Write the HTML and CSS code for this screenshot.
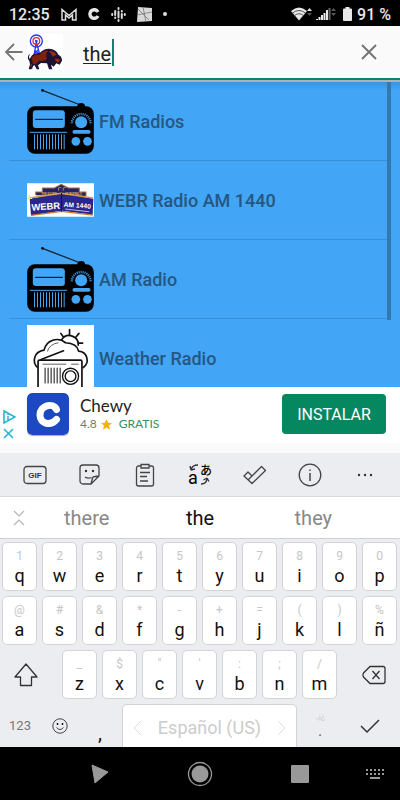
FILE: index.html
```html
<!DOCTYPE html>
<html lang="es">
<head>
    <meta charset="UTF-8">
    <meta name="viewport" content="width=device-width, initial-scale=1.0">
    <title>Buffalo Radio</title>
    <link rel="stylesheet" href="styles.css">
</head>
<body>
    <!-- shared icon for the generic stations -->
    <svg class="sprite" aria-hidden="true">
        <symbol id="radio" viewBox="0 0 200 195">
            <path d="M46 4L160 48" stroke="#123" stroke-width="4"/>
            <circle cx="46" cy="4" r="4"/>
            <path d="M150 54a12 12 0 0 1 24 0z"/>
            <rect y="52" width="200" height="142" rx="23"/>
            <g fill="#42a5f5">
                <rect x="17" y="64" width="96" height="53" rx="9"/>
                <rect x="136" y="123" width="54" height="11" rx="5"/>
                <circle cx="162" cy="100" r="18"/>
                <circle cx="146" cy="157" r="13"/>
                <circle cx="181" cy="157" r="13"/>
            </g>
            <path d="M24 91H107" stroke="#000" stroke-width="3"/>
            <g stroke="#42a5f5" fill="none">
                <path d="M8 130H120" stroke-width="3"/>
                <path d="M22 136v45M31 136v45M40 136v45M49 136v45M58 136v45M67 136v45M76 136v45M85 136v45M94 136v45M103 136v45M111 136v45" stroke-width="3"/>
                <path d="M134 103A28 28 0 1 1 190 103" stroke-width="7" stroke-dasharray="3 3"/>
            </g>
        </symbol>
    </svg>

    <header class="status">
        <span class="time">12:35</span>
        <svg width="16" height="13" viewBox="0 0 16 13"><path d="M1 12V1.500L8 7.500L15 1.500V12H11.500V7L8 10L4.500 7V12Z" fill="none" stroke="#ddd" stroke-width="1.500"/></svg>
        <svg width="12" height="12" viewBox="0 0 12 12"><path d="M10 4A4.300 4.300 0 1 0 10 8" fill="none" stroke="#e4e4e4" stroke-width="3.400"/></svg>
        <svg width="15" height="15" viewBox="0 0 15 15"><path d="M1.200 7v1M4.200 4v4M4.200 10.500v.5M7.500 1v1M7.500 4.500v6M7.500 13v1M10.800 4v.5M10.800 7v4M13.800 7v1" stroke="#ddd" stroke-width="2" stroke-linecap="round"/></svg>
        <svg width="15" height="15" viewBox="0 0 15 15"><path d="M1 0L15 1V14L0 15Z" fill="#d8d8d8"/><path d="M0 8L15 5M6 0L9 15M1 2L12 13" stroke="#777" stroke-width=".8"/></svg>
        <span class="dot"></span>
        <span class="status-right">
            <svg width="22" height="14" viewBox="0 0 22 14"><path d="M0 4Q8 -3 16 4L8 13.500Z" fill="#e8e8e8"/><path d="M1.500 6Q8 1 14.500 6M3.500 8.500Q8 5 12.500 8.500" fill="none" stroke="#555" stroke-width="1"/><path d="M16 4L18.500 1L21 4Z" fill="#ddd"/><path d="M16 6L18.500 9L21 6Z" fill="#555"/></svg>
            <svg width="20" height="14" viewBox="0 0 20 14"><path d="M1 13v-1M3.500 13v-3M6 13V8M8.500 13V6M11 13V3" stroke="#e8e8e8" stroke-width="2"/><path d="M13.500 13V1" stroke="#666" stroke-width="2"/><path d="M15 4L17.500 1L20 4ZM15 6L17.500 9L20 6Z" fill="#555"/></svg>
            <svg class="battery" width="9" height="14" viewBox="0 0 9 14"><path d="M2.500 0h4v1.500H8a1 1 0 0 1 1 1V13a1 1 0 0 1-1 1H1a1 1 0 0 1-1-1V2.500a1 1 0 0 1 1-1h1.500Z" fill="#e8e8e8"/></svg>
            <span>91 %</span>
        </span>
    </header>

    <form class="search">
        <button type="button" class="back" aria-label="Atrás">
            <svg width="18" height="18" viewBox="0 0 18 18"><path d="M17.500 9H1.500M9 1L1 9L9 17" fill="none" stroke="#757575" stroke-width="1.800"/></svg>
        </button>
        <svg class="logo" viewBox="0 0 108 108">
            <rect width="108" height="108" fill="#fff"/>
            <g fill="none" stroke="#2338f2" stroke-width="4">
                <circle cx="28" cy="21" r="18"/>
                <path d="M28 24L14 104M28 24L42 76M22 48L36 60M20 60L34 48"/>
            </g>
            <circle cx="28" cy="21" r="10" fill="none" stroke="#e02a35" stroke-width="4"/>
            <circle cx="28" cy="21" r="4" fill="#2338f2"/>
            <path d="M3 75Q1 64 9 59Q4 68 8 75L15 64Q25 56 38 57Q50 44 66 44Q88 45 94 62Q105 66 105 80L98 92L88 88L80 98L72 92L76 106H66L60 88L42 87L33 94L37 106H29L23 94L18 96L13 106H5L9 91L7 81Z" fill="#1d1233"/>
            <path d="M14 70Q24 60 38 62Q50 48 64 50Q54 58 60 76Q50 83 36 80Q28 92 18 91Q15 80 14 70Z" fill="#7d220e"/>
            <path d="M66 50Q84 51 88 62L78 68ZM84 72L100 77L94 86L86 81ZM10 92L16 88L12 101Z" fill="#9b2b12"/>
        </svg>
        <label class="field" aria-label="Buscar">
            <input type="text" class="query" value="the" spellcheck="false">
            <span class="caret"></span>
        </label>
        <button type="button" class="clear" aria-label="Borrar">
            <svg width="16" height="16" viewBox="0 0 16 16"><path d="M1 1L15 15M15 1L1 15" stroke="#757575" stroke-width="2"/></svg>
        </button>
    </form>

    <main class="stations">
        <ul class="station-list">
            <li class="station"><svg class="thumb"><use href="#radio"/></svg><span>FM Radios</span></li>
            <li class="station">
                <svg class="thumb thumb-wide" viewBox="0 0 200 100">
                    <rect width="200" height="100" fill="#fff"/>
                    <path d="M26 36V26H46V14H82L102 3L124 14H156V26H176V38Z" fill="#272266"/>
                    <path d="M26 34V26H46V14H82L102 3L124 14H156V26H176V38" fill="none" stroke="#a56c43" stroke-width="3"/>
                    <path d="M8 46L102 28L198 46L196 94L104 82L12 96Z" fill="#2b268b"/>
                    <path d="M8 44L102 30L198 44" fill="none" stroke="#d39a45" stroke-width="4"/>
                    <path d="M12 96L104 84L196 95" fill="none" stroke="#cf7b35" stroke-width="4"/>
                    <path d="M103 29V84" stroke="#15123f" stroke-width="3"/>
                    <path d="M94 22v-8l8-2M108 22v-8l8-2" fill="none" stroke="#e4b55e" stroke-width="2"/>
                    <path d="M7 35V54M1 45H15" stroke="#ffe37c" stroke-width="4"/>
                    <text x="56" y="79" class="sign-big" transform="rotate(-4 56 70)">WEBR</text>
                    <text x="150" y="73" class="sign-small" transform="rotate(4 150 65)">AM 1440</text>
                    <path d="M114 77L186 85" stroke="#fff" stroke-width="2"/>
                    <text x="66" y="35" class="sign-tiny">THE SOUND</text>
                    <text x="138" y="35" class="sign-tiny">OF BUFFALO</text>
                </svg>
                <span>WEBR Radio AM 1440</span>
            </li>
            <li class="station"><svg class="thumb"><use href="#radio"/></svg><span>AM Radio</span></li>
            <li class="station">
                <svg class="thumb thumb-square" viewBox="0 0 200 200">
                    <rect width="200" height="200" fill="#fff"/>
                    <g fill="none" stroke="#111" stroke-width="5" stroke-linecap="round" stroke-linejoin="round">
                        <path d="M32 127C14 112 20 79 51 75C57 45 93 34 115 53C142 54 151 63 154 78C181 80 188 113 168 127"/>
                        <path d="M104 43A27 27 0 0 1 153 60M127 14V29M101 25L108 35M155 25L147 35M152 54H166"/>
                        <path d="M61 78Q67 57 93 53" stroke-width="2"/>
                        <path d="M42 103L109 77"/>
                        <rect x="33" y="105" width="131" height="83" rx="4" fill="#fff"/>
                        <path d="M48 117H116M133 117H153" stroke-width="2"/>
                        <path d="M54 128V173M63 128V173M72 128V173M81 128V173M90 128V173M99 128V173" stroke-width="3"/>
                        <circle cx="130" cy="153" r="24" stroke-width="4"/>
                        <circle cx="130" cy="153" r="16" stroke-width="4"/>
                    </g>
                </svg>
                <span>Weather Radio</span>
            </li>
        </ul>
        <span class="scrollbar"></span>
    </main>

    <aside class="ad">
        <span class="ad-marks">
            <svg width="13" height="14" viewBox="0 0 13 14"><path d="M1 1L12 7L1 13Z" fill="none" stroke="#21b2cf" stroke-width="1.500"/><path d="M5 6V10M5 4V5" stroke="#21b2cf" stroke-width="1.500"/></svg>
            <svg width="11" height="11" viewBox="0 0 11 11"><path d="M1 1L10 10M10 1L1 10" stroke="#21b2cf" stroke-width="1.500"/></svg>
        </span>
        <svg class="ad-icon" viewBox="0 0 42 42"><rect width="42" height="42" rx="5" fill="#1c49c2"/><path d="M29.500 16.500C26 9 13 12.500 13 22C13 31.500 24 33 29.500 26.500" fill="none" stroke="#fff" stroke-width="7" stroke-linecap="round"/></svg>
        <div class="ad-text">
            <div class="ad-name">Chewy</div>
            <div class="ad-info">
                <span>4.8</span>
                <svg width="11" height="11" viewBox="0 0 20 20"><path d="M10 0L13 7L20 7.500L14.500 12L16.500 19.500L10 15.500L3.500 19.500L5.500 12L0 7.500L7 7Z" fill="#f5ae13"/></svg>
                <span class="ad-free">GRATIS</span>
            </div>
        </div>
        <button type="button" class="install">INSTALAR</button>
    </aside>

    <section class="keyboard">
        <div class="tools">
            <button type="button" aria-label="GIF"><svg width="24" height="20" viewBox="0 0 24 20"><rect x="1" y="1.500" width="22" height="17" rx="3" fill="none" stroke="#444" stroke-width="1.300"/><text x="12" y="13" class="gif">GIF</text></svg></button>
            <button type="button" aria-label="Stickers"><svg width="22" height="22" viewBox="0 0 22 22"><path d="M12 20H4a3 3 0 0 1-3-3V4a3 3 0 0 1 3-3H17a3 3 0 0 1 3 3V12L12 20ZM12 20L13.500 14Q14 12.500 16 12.500L20 12M6 13Q9 15 12.500 13.500" fill="none" stroke="#444" stroke-width="1.300"/><circle cx="7" cy="7" r="1.200" fill="#333"/><circle cx="14" cy="7" r="1.200" fill="#333"/></svg></button>
            <button type="button" aria-label="Portapapeles"><svg width="20" height="24" viewBox="0 0 20 24"><path d="M6 3H3.500A2 2 0 0 0 1.500 5V21a2 2 0 0 0 2 2H16.500a2 2 0 0 0 2-2V5a2 2 0 0 0-2-2H14M6 1.500H14V5H6ZM5 9.500H15M5 13.500H12M5 18H13" fill="none" stroke="#444" stroke-width="1.300"/></svg></button>
            <button type="button" aria-label="Traducir"><svg width="28" height="33" viewBox="-1 -4 28 33"><text x="1" y="22" class="tr-latin">a</text><text x="13" y="13" class="tr-kana">あ</text><path d="M4 8Q5 3 11 3M4 8L3 4M4 8L8 7M14 22Q20 22 20 16M20 16L16.500 18M20 16L22 19.500" fill="none" stroke="#333" stroke-width="1.300"/></svg></button>
            <button type="button" aria-label="Corrector"><svg width="24" height="20" viewBox="0 0 24 20"><path d="M1 11L5 7L9 11L18.500 1.500L22.500 5.500L9 18.500ZM5 15L9 11" fill="none" stroke="#444" stroke-width="1.300" stroke-linejoin="round"/></svg></button>
            <button type="button" aria-label="Información"><svg width="24" height="24" viewBox="0 0 24 24"><circle cx="12" cy="12" r="10.800" fill="none" stroke="#444" stroke-width="1.300"/><path d="M12 10V18M12 6.500V8" stroke="#444" stroke-width="1.500"/></svg></button>
            <button type="button" aria-label="Más"><svg width="16" height="4" viewBox="0 0 16 4"><circle cx="2" cy="2" r="1.200" fill="#333"/><circle cx="8" cy="2" r="1.200" fill="#333"/><circle cx="14" cy="2" r="1.200" fill="#333"/></svg></button>
        </div>

        <div class="suggestions">
            <button type="button" class="expand" aria-label="Expandir"><svg width="12" height="16" viewBox="0 0 12 16"><path d="M1 1L6 6L11 1M1 15L6 10L11 15" fill="none" stroke="#b5b5b5" stroke-width="1.200"/></svg></button>
            <button type="button">there</button>
            <button type="button" class="best">the</button>
            <button type="button">they</button>
            <span></span>
        </div>

        <div class="keys">
            <button type="button" class="key"><small>1</small>q</button>
            <button type="button" class="key"><small>2</small>w</button>
            <button type="button" class="key"><small>3</small>e</button>
            <button type="button" class="key"><small>4</small>r</button>
            <button type="button" class="key"><small>5</small>t</button>
            <button type="button" class="key"><small>6</small>y</button>
            <button type="button" class="key"><small>7</small>u</button>
            <button type="button" class="key"><small>8</small>i</button>
            <button type="button" class="key"><small>9</small>o</button>
            <button type="button" class="key"><small>0</small>p</button>

            <button type="button" class="key"><small>@</small>a</button>
            <button type="button" class="key"><small>#</small>s</button>
            <button type="button" class="key"><small>&amp;</small>d</button>
            <button type="button" class="key"><small>*</small>f</button>
            <button type="button" class="key"><small>-</small>g</button>
            <button type="button" class="key"><small>+</small>h</button>
            <button type="button" class="key"><small>=</small>j</button>
            <button type="button" class="key"><small>(</small>k</button>
            <button type="button" class="key"><small>)</small>l</button>
            <button type="button" class="key"><small>%</small>ñ</button>

            <button type="button" class="plain wide shift" aria-label="Mayúsculas"><svg width="24" height="24" viewBox="0 0 24 24"><path d="M12 1L23 14H17.500V22.500H6.500V14H1Z" fill="none" stroke="#333" stroke-width="1.300" stroke-linejoin="round"/></svg></button>
            <button type="button" class="key"><small>_</small>z</button>
            <button type="button" class="key"><small>$</small>x</button>
            <button type="button" class="key"><small>"</small>c</button>
            <button type="button" class="key"><small>'</small>v</button>
            <button type="button" class="key"><small>:</small>b</button>
            <button type="button" class="key"><small>;</small>n</button>
            <button type="button" class="key"><small>/</small>m</button>
            <button type="button" class="plain wide delete" aria-label="Borrar letra"><svg width="24" height="20" viewBox="0 0 24 20"><path d="M8 1.500H21Q23 1.500 23 3.500V16.500Q23 18.500 21 18.500H8L1.500 12Q.5 10 1.500 8ZM10.500 6L17.500 14M17.500 6L10.500 14" fill="none" stroke="#333" stroke-width="1.300"/></svg></button>
        </div>

        <div class="keys last-row">
            <button type="button" class="plain numbers">123</button>
            <button type="button" class="plain" aria-label="Emoji"><svg width="16" height="16" viewBox="0 0 16 16"><circle cx="8" cy="8" r="7.200" fill="none" stroke="#444"/><circle cx="5.500" cy="6" r=".9"/><circle cx="10.500" cy="6" r=".9"/><path d="M4.500 9.500Q8 13.500 11.500 9.500" fill="none" stroke="#444"/></svg></button>
            <button type="button" class="plain comma">,</button>
            <button type="button" class="key space">
                <svg width="9" height="16" viewBox="0 0 9 16"><path d="M8 1L1 8L8 15" fill="none" stroke="#ddd"/></svg>
                Español (US)
                <svg width="9" height="16" viewBox="0 0 9 16"><path d="M1 1L8 8L1 15" fill="none" stroke="#ddd"/></svg>
            </button>
            <button type="button" class="plain period"><small>.,¡¿</small>.</button>
            <button type="button" class="plain wide" aria-label="Aceptar"><svg width="20" height="16" viewBox="0 0 20 16"><path d="M1 8L7 14L19 2" fill="none" stroke="#333" stroke-width="1.500"/></svg></button>
        </div>
    </section>

    <nav class="navbar">
        <button type="button" aria-label="Volver"><svg width="18" height="20" viewBox="0 0 18 20"><path d="M1 1L17 8L4 19Z" fill="#999" stroke="#999" stroke-linejoin="round"/></svg></button>
        <button type="button" aria-label="Inicio"><svg width="26" height="26" viewBox="0 0 26 26"><circle cx="13" cy="13" r="8.500" fill="#999"/><circle cx="13" cy="13" r="11.500" fill="none" stroke="#999" stroke-width="1.300"/></svg></button>
        <button type="button" aria-label="Recientes"><svg width="18" height="18" viewBox="0 0 18 18"><rect width="18" height="18" rx="1" fill="#999"/></svg></button>
        <button type="button" aria-label="Teclado"><svg width="18" height="12" viewBox="0 0 18 12"><path d="M0 2H18M0 6H18" stroke="#999" stroke-width="2" stroke-dasharray="2 2"/><path d="M4 10H14" stroke="#999" stroke-width="2"/></svg></button>
    </nav>
</body>
</html>
```

FILE: styles.css
```css
* {
    box-sizing: border-box;
}
body {
    margin: 0;
    height: 100vh;
    display: flex;
    flex-direction: column;
    background-color: #fafafa;
    font-family: Roboto, sans-serif;
    overflow: hidden;
}
button {
    display: flex;
    align-items: center;
    justify-content: center;
    padding: 0;
    border: none;
    background: none;
    color: #111;
    font-family: inherit;
}
svg {
    flex: none;
}
.sprite {
    position: absolute;
    width: 0;
    height: 0;
}

/* status bar */
.status {
    display: flex;
    align-items: center;
    gap: 11px;
    height: 26px;
    padding: 2px 9px 0;
    background-color: #000;
    color: #e8e8e8;
    font-size: 16px;
    font-weight: 500;
}
.dot {
    width: 4px;
    height: 4px;
    border-radius: 50%;
    background-color: #ddd;
}
.status-right {
    display: flex;
    align-items: center;
    gap: 3px;
    margin-left: auto;
}
.battery {
    margin: 0 2px 0 4px;
}

/* search bar */
.search {
    display: flex;
    align-items: center;
    height: 56px;
    padding: 0 23px 2px 5px;
    background-color: #fafafa;
    border-bottom: 2px solid #b0b0b0;
    box-shadow: inset 0 -2px #0d8172;
}
.logo {
    width: 36px;
    height: 36px;
    margin: 0 20px 0 4px;
}
.field {
    display: flex;
    align-items: center;
    flex: 1;
}
.query {
    width: 29px;
    field-sizing: content;
    padding: 3px 0 0;
    border: none;
    outline: none;
    background: none;
    color: #222;
    font-family: inherit;
    font-size: 20px;
    text-decoration: underline;
    text-decoration-thickness: 1px;
    text-underline-offset: 2px;
}
.caret {
    width: 2px;
    height: 27px;
    background-color: #0d8172;
}

/* station list */
.stations {
    display: flex;
    flex: 1;
    min-height: 0;
    position: relative;
    overflow: hidden;
    padding: 0 9px;
    background: linear-gradient(#3b93db, #42a5f5 8px);
}
.station-list {
    flex: 1;
    margin: 0;
    padding: 0;
    list-style: none;
}
.station {
    display: flex;
    align-items: center;
    gap: 5px;
    height: 79px;
    padding-left: 18px;
    border-bottom: 1px solid #398fd6;
    color: #255782;
    font-size: 18px;
    font-weight: 500;
}
.thumb {
    width: 67px;
    height: 65px;
}
.thumb-wide {
    height: 34px;
}
.thumb-square {
    height: 67px;
}
.sign-big, .sign-small, .sign-tiny, .gif {
    font-family: "Liberation Sans Narrow", "Liberation Sans", sans-serif;
    font-weight: bold;
    text-anchor: middle;
    fill: #fff;
}
.sign-big {
    font-size: 28px;
}
.sign-small {
    font-size: 20px;
}
.sign-tiny {
    font-size: 8px;
    fill: #e4b55e;
}
.scrollbar {
    position: absolute;
    top: 0;
    right: 9px;
    width: 4px;
    height: 78%;
    background-color: #3578ad;
}

/* ad banner */
.ad {
    display: flex;
    align-items: center;
    height: 56px;
    margin-bottom: 10px;
    padding: 0 14px 2px 3px;
    background-color: #fff;
    font-family: Lato, sans-serif;
}
.ad-marks {
    display: flex;
    flex-direction: column;
    gap: 4px;
    width: 24px;
    padding-top: 21px;
}
.ad-icon {
    width: 42px;
    height: 42px;
    border-radius: 5px;
    box-shadow: 0 1px 1px #aaa;
}
.ad-text {
    flex: 1;
    padding-left: 11px;
}
.ad-name {
    color: #222;
    font-size: 17px;
    line-height: 20px;
}
.ad-info {
    display: flex;
    align-items: center;
    gap: 4px;
    color: #777;
    font-size: 12px;
    line-height: 16px;
}
.ad-free {
    margin-left: 3px;
    color: #2f925f;
}
.install {
    width: 104px;
    height: 40px;
    border-radius: 4px;
    background-color: #05875f;
    color: #fff;
    font-family: Roboto, sans-serif;
    font-size: 16px;
}

/* keyboard */
.keyboard {
    background-color: #ecedf1;
}
.tools {
    display: grid;
    grid-template-columns: repeat(7, 1fr);
    height: 43px;
    padding: 0 7px;
}
.gif {
    font-size: 8px;
    fill: #333;
}
.tr-latin {
    font-size: 18px;
}
.tr-kana {
    font-family: "Noto Sans CJK JP", sans-serif;
    font-size: 12px;
    font-weight: 500;
}
.suggestions {
    display: grid;
    grid-template-columns: 30px 1fr 1fr 1fr 30px;
    height: 43px;
    background-color: #fff;
    border-top: 1px solid #d9d9dc;
    border-bottom: 1px solid #d0d0d3;
}
.suggestions button {
    color: #888;
    font-size: 20px;
}
.suggestions .best {
    color: #111;
}
.suggestions .expand {
    padding-left: 8px;
}
.keys {
    display: grid;
    grid-template-columns: repeat(20, 1fr);
    grid-auto-rows: 49px;
    row-gap: 5px;
    padding-top: 3px;
}
.key {
    flex-direction: column;
    grid-column: span 2;
    margin: 0 3px 0 2px;
    border: 1px solid #d3d3d6;
    border-radius: 5px;
    background-color: #fff;
    font-size: 18px;
    line-height: 22px;
}
.key small {
    color: #c6c6c6;
    font-size: 12px;
    line-height: 18px;
}
.plain {
    grid-column: span 2;
}
.wide {
    grid-column: span 3;
}
.shift {
    padding-right: 8px;
}
.delete {
    padding-left: 8px;
}
.last-row {
    grid-auto-rows: 43px;
    padding-top: 5px;
}
.numbers {
    color: #777;
    font-size: 13px;
}
.comma {
    padding-top: 14px;
    font-size: 20px;
}
.space {
    grid-column: span 9;
    flex-direction: row;
    justify-content: space-between;
    padding: 4px 10px 0;
    border-bottom: none;
    border-radius: 5px 5px 0 0;
    color: #ccc;
}
.period {
    flex-direction: column;
    color: #666;
    font-size: 16px;
}
.period small {
    color: #ccc;
    font-size: 9px;
}

/* system navigation */
.navbar {
    display: grid;
    grid-template-columns: 2fr 2fr 2fr 1fr;
    height: 53px;
    padding-left: 50px;
    background-color: #000;
}
```
